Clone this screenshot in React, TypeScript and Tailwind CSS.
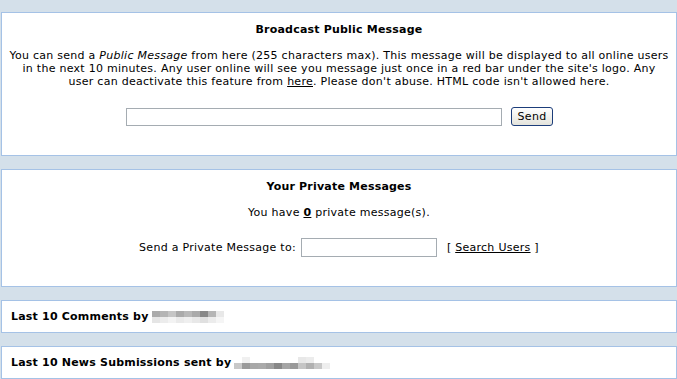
import React from 'react';

// pixelated (blurred) username placeholder
function Blur({ top, bottom }: { top: string[]; bottom: string[] }) {
  return (
    <span className="inline-flex flex-col align-middle">
      <span className="flex">
        {top.map((c, i) => (
          <span key={i} className="w-[8px] h-[6px]" style={{ background: c }} />
        ))}
      </span>
      <span className="flex">
        {bottom.map((c, i) => (
          <span key={i} className="w-[8px] h-[6px]" style={{ background: c }} />
        ))}
      </span>
    </span>
  );
}

function Panel({ children, className = '' }: { children: React.ReactNode; className?: string }) {
  return <div className={`bg-white border border-[#a5c2e6] ${className}`}>{children}</div>;
}

export default function App() {
  return (
    <div
      className="min-h-[379px] bg-[#d4e0ea] pt-[12px] pl-[1px] flex flex-col gap-[13px] text-[11px] leading-[13px] tracking-[0.27px] text-black"
      style={{ fontFamily: 'Verdana, "DejaVu Sans", sans-serif' }}
    >
      {/* Broadcast */}
      <Panel className="h-[144px] pt-[10px] flex flex-col items-center">
        <h2 className="font-bold tracking-[0.2px]">Broadcast Public Message</h2>
        <p className="mt-[13px] text-center whitespace-nowrap">
          You can send a <i>Public Message</i> from here (255 characters max). This message will be displayed to all online users
          <br />
          in the next 10 minutes. Any user online will see you message just once in a red bar under the site's logo. Any
          <br />
          user can deactivate this feature from <u>here</u>. Please don't abuse. HTML code isn't allowed here.
        </p>
        <div className="mt-[19px] flex items-center gap-[9px] pl-[1px]">
          <input className="w-[376px] h-[18px] border border-[#a5acb2] outline-none" />
          <button className="h-[19px] px-[6px] rounded-[3px] border border-[#1c3d7a] bg-gradient-to-b from-white to-[#e3e3dc] text-[11px] leading-[15px]">
            Send
          </button>
        </div>
      </Panel>

      {/* Private messages */}
      <Panel className="h-[118px] pt-[10px] flex flex-col items-center">
        <h2 className="font-bold tracking-[0.2px]">Your Private Messages</h2>
        <p className="mt-[13px]">
          You have <u className="font-bold">0</u> private message(s).
        </p>
        <div className="mt-[19px] flex items-center">
          <span>Send a Private Message to:</span>
          <input className="ml-[5px] w-[136px] h-[19px] border border-[#a5acb2] outline-none" />
          <span className="ml-[10px]">
            [ <u>Search Users</u> ]
          </span>
        </div>
      </Panel>

      <Panel className="h-[33px] pl-[9px] flex items-center">
        <span className="font-bold tracking-[0.2px] mr-[3px]">Last 10 Comments by</span>
        <Blur
          top={['#aaa', '#b5b5b5', '#c5c5c5', '#aaa', '#b8b8b8', '#aaa', '#888', '#b5b5b5', '#e8e8e8', '#fff', '#fff']}
          bottom={['#e5e5e5', '#ececec', '#f3f3f3', '#eaeaea', '#efefef', '#e8e8e8', '#e0e0e0', '#ececec', '#f5f5f5', '#fff', '#fff']}
        />
      </Panel>

      <Panel className="h-[33px] pl-[9px] flex items-center">
        <span className="font-bold tracking-[0.2px] mr-[3px]">Last 10 News Submissions sent by</span>
        <Blur
          top={['#fff', '#f0f0f0', '#fff', '#fff', '#fff', '#fff', '#fff', '#fff', '#e8e8e8', '#ececec', '#fff', '#fff']}
          bottom={['#c8c8c8', '#999', '#a8a8a8', '#aaa', '#a0a0a0', '#888', '#a5a5a5', '#999', '#c5c5c5', '#b0b0b0', '#c8c8c8', '#eee']}
        />
      </Panel>
    </div>
  );
}
